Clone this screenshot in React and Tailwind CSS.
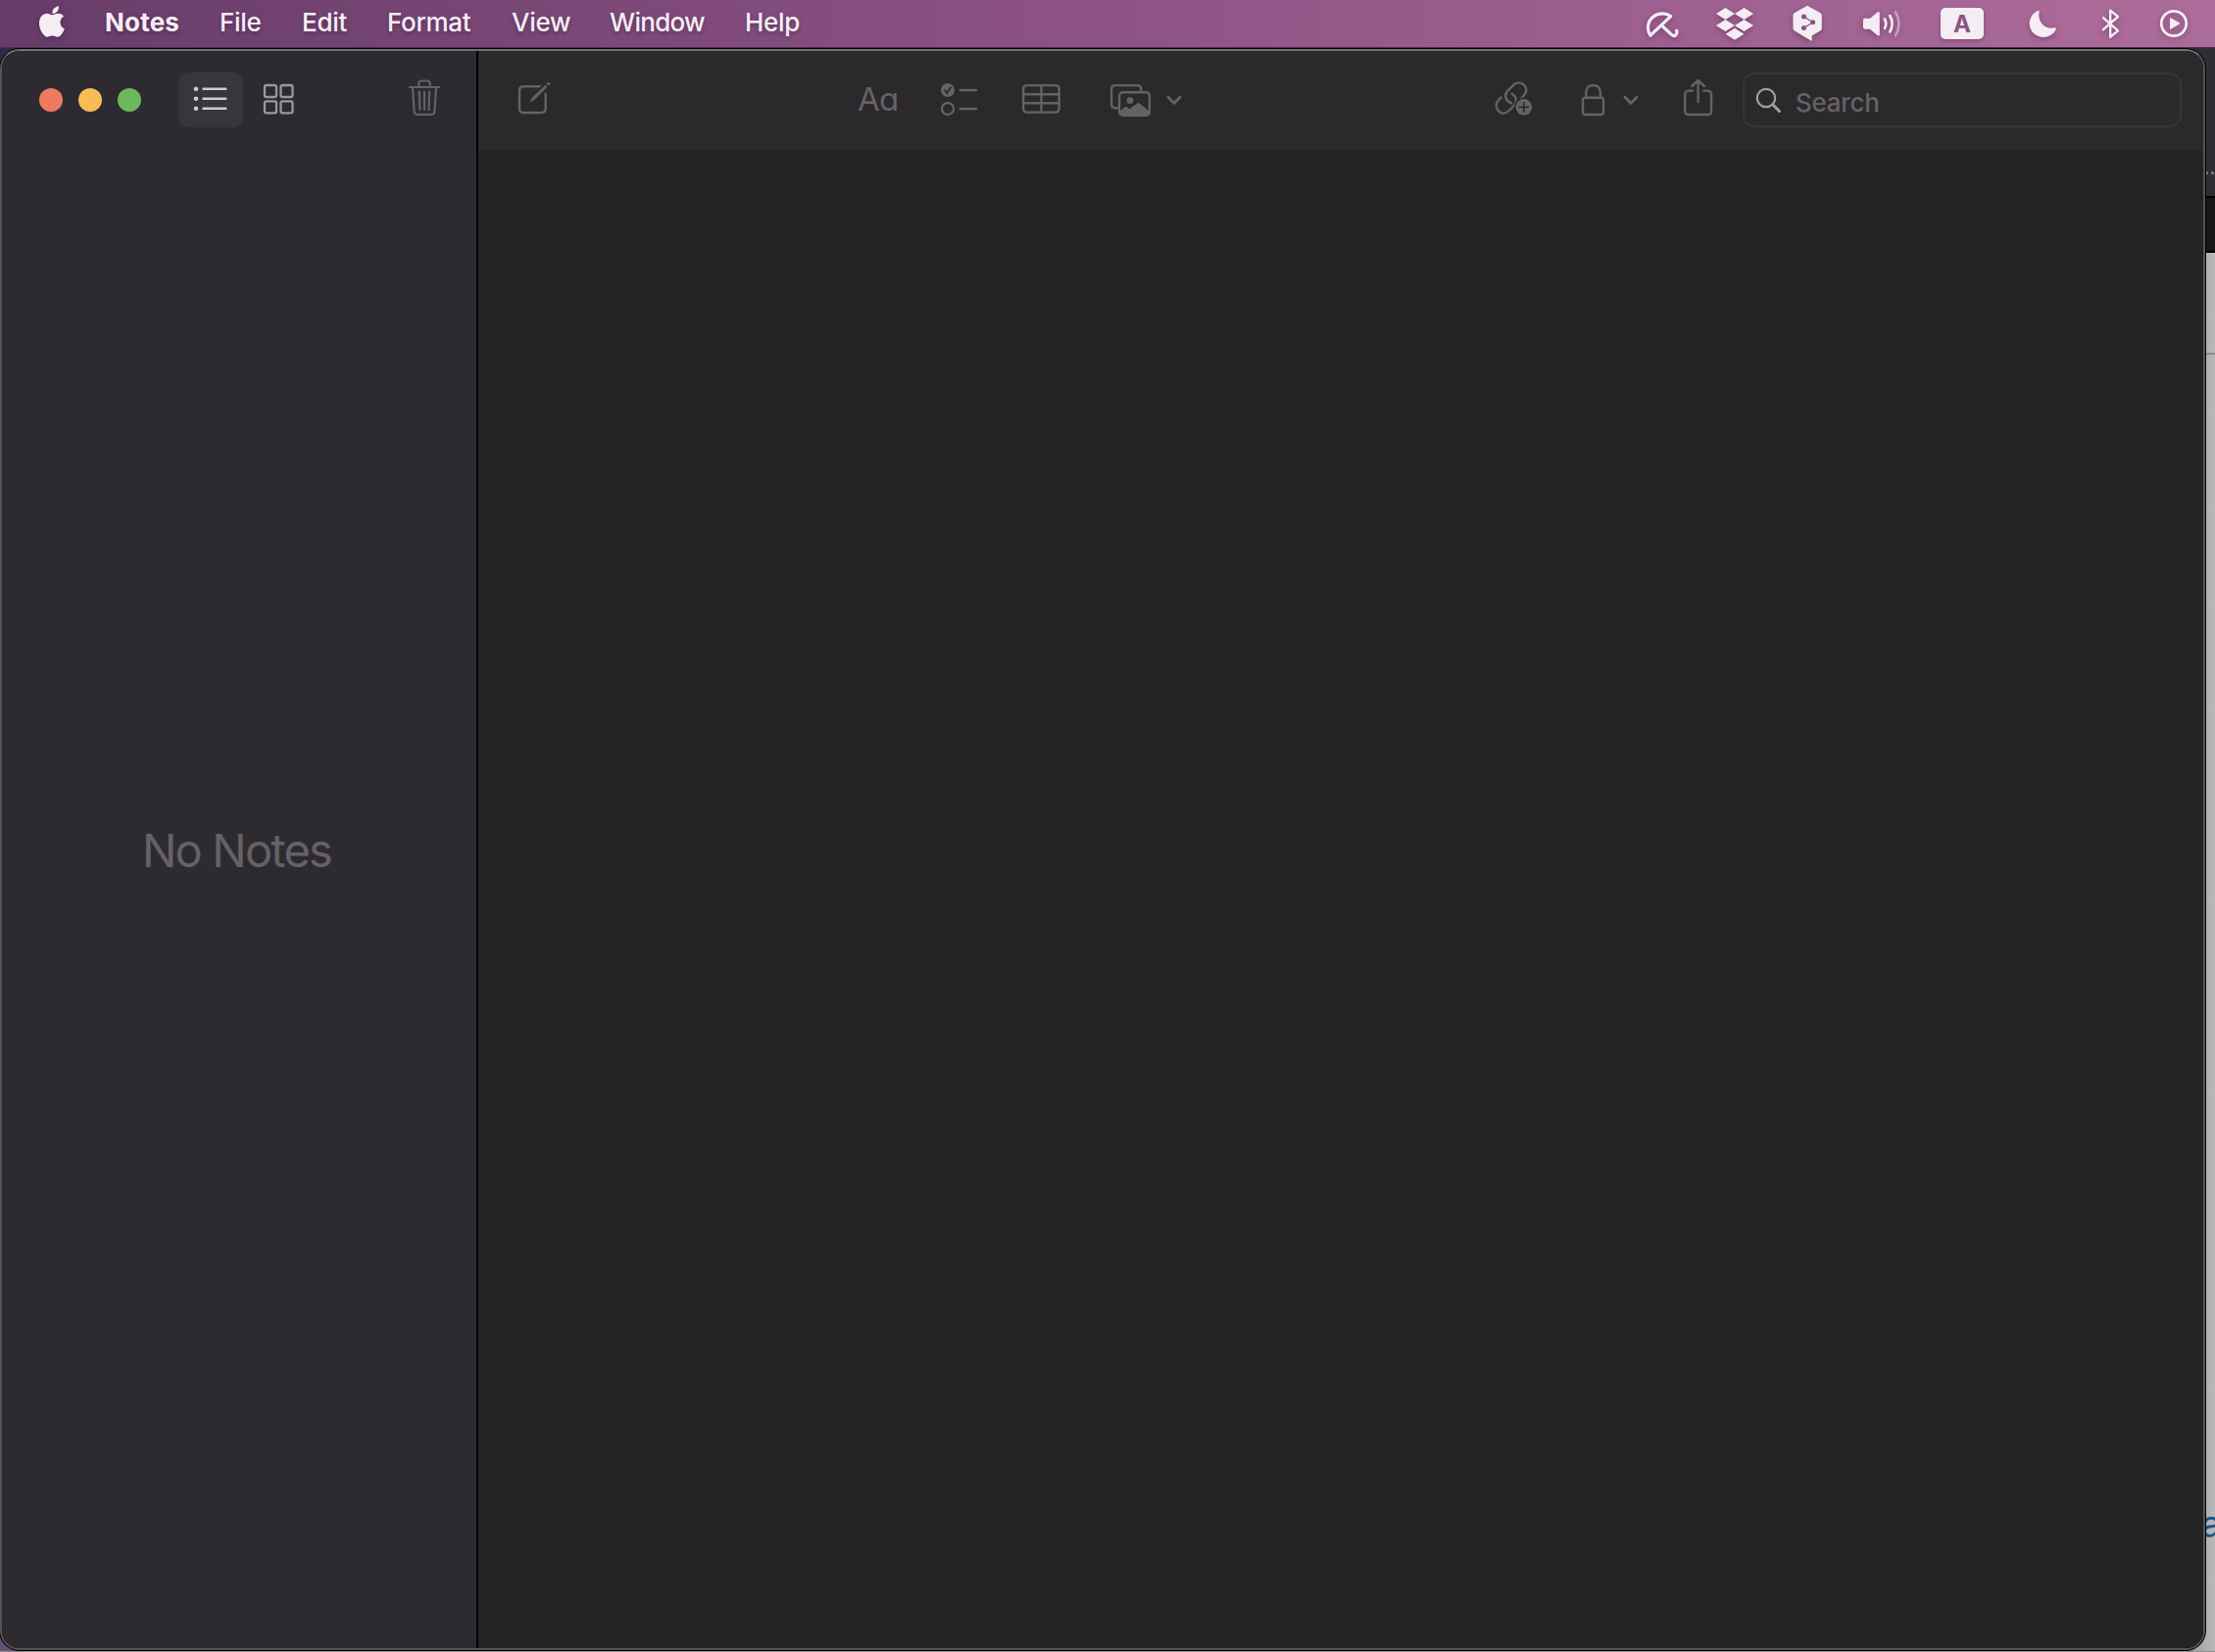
import React from "react";

const INK = "#656266";

/* Menu bar glyph: a full-height slot whose viewBox uses screen coordinates. */
function MenuGlyph({ x, w, className = "", children }) {
  return (
    <svg
      width={w}
      height="48"
      viewBox={`${x} 0 ${w} 48`}
      fill="#f4edf3"
      className={`block shrink-0 drop-shadow-[0_2px_3px_rgba(50,10,50,0.35)] ${className}`}
    >
      {children}
    </svg>
  );
}

/* Toolbar glyph: a 60px high slot starting at y=72 in screen coordinates. */
function Tool({ x, w, color = INK, sw = 2.2, className = "", children }) {
  return (
    <svg
      width={w}
      height="60"
      viewBox={`${x} 72 ${w} 60`}
      fill="none"
      stroke={color}
      strokeWidth={sw}
      strokeLinecap="round"
      strokeLinejoin="round"
      className={`block shrink-0 ${className}`}
    >
      {children}
    </svg>
  );
}

function MenuBar() {
  return (
    <header className="flex h-12 w-full items-start bg-linear-to-r from-[#673c69] via-[#8e5385] to-[#ad6d9b] text-[26px] leading-[46px] font-medium text-[#f5eef4] [text-shadow:0_2px_4px_rgba(40,10,40,0.35)]">
      <MenuGlyph x={0} w={107}>
        <path d="M60 6.2c.3 2.200-.5 4.100-1.700 5.500-1.300 1.500-3.200 2.300-4.900 2.200-.3-2 .6-4 1.800-5.300C56.500 7.200 58.500 6.300 60 6.200z" />
        <path d="M53.300 15.300c1.500 0 3.300-1.500 6.200-1.500 2.400 0 4.300 1 5.600 2.900-5.400 3.200-4.500 10.400.7 12.700-1.300 3.500-4.100 8.300-7.100 8.300-2 0-2.700-1.200-5.200-1.200-2.500 0-3.300 1.200-5.200 1.200-3.500 0-8.300-7.200-8.300-14 0-6.300 4-9.900 7.900-9.900 2.300 0 4.100 1.500 5.400 1.500z" />
      </MenuGlyph>
      <span className="w-[117px] shrink-0 font-bold tracking-[0.2px]">Notes</span>
      <span className="w-[84px] shrink-0 tracking-[-0.3px]">File</span>
      <span className="w-[87px] shrink-0 tracking-[-0.3px]">Edit</span>
      <span className="w-[127px] shrink-0 tracking-[-0.3px]">Format</span>
      <span className="w-[100px] shrink-0 tracking-[-0.3px]">View</span>
      <span className="w-[138px] shrink-0 tracking-[-0.7px]">Window</span>
      <span className="shrink-0 tracking-[-0.3px]">Help</span>

      <div className="ml-auto flex">
        <MenuGlyph x={1670} w={65}>
          <path
            d="M1684 36.200c-4.200-6-3.300-14 2.700-18.900 5.500-4.500 13-4.200 18-.7zM1695.500 26l10 9.300c3 2.700 6.200.3 5.200-4"
            fill="none"
            stroke="#f4edf3"
            strokeWidth="3.200"
            strokeLinecap="round"
            strokeLinejoin="round"
          />
        </MenuGlyph>
        <MenuGlyph x={1735} w={75}>
          <path d="M1760.500 8l9.500 6-9.500 6-9.500-6zM1779.500 8l9.500 6-9.500 6-9.500-6zM1760.500 20l9.500 6-9.500 6-9.500-6zM1779.500 20l9.500 6-9.500 6-9.500-6zM1770 28.700l9.500 6-9.500 6-9.500-6z" />
        </MenuGlyph>
        <MenuGlyph x={1810} w={70}>
          <path d="M1843 6.300q1-.6 2 0l12.500 7q1.300.8 1.300 2.200v13.500q0 1.400-1.300 2.200l-8.800 5.200v5.600l-6-3.600-12-7.200q-1.200-.8-1.200-2.200v-13.500q0-1.400 1.200-2.200z" />
          <g fill="#8b527f" stroke="#8b527f" strokeWidth="1.200">
            <circle cx="1840.500" cy="17" r="1.900" />
            <circle cx="1849.700" cy="22.700" r="1.900" />
            <circle cx="1840.500" cy="28.500" r="1.900" />
            <path d="M1840.500 17l9.200 5.700-9.200 5.800" fill="none" />
          </g>
        </MenuGlyph>
        <MenuGlyph x={1880} w={80}>
          <path d="M1901 20.500q0-1.700 1.700-1.700h5.300l7.500-6.300q2.300-1.200 2.300 1v21.500q0 2.200-2.300 1l-7.500-6.300h-5.300q-1.700 0-1.700-1.700z" />
          <g fill="none" stroke="#f4edf3" strokeWidth="2.600" strokeLinecap="round">
            <path d="M1923 19.500q2.600 4.700 0 9.400" />
            <path d="M1928.300 16q4.600 8.200 0 16.500" />
            <path d="M1934 12.300q7 12 0 24" opacity=".45" />
          </g>
        </MenuGlyph>
        <div className="flex w-[80px] justify-start pt-2 pl-5">
          <div className="flex h-8 w-11 items-center justify-center rounded-[5px] bg-[#f4edf3] pt-px text-[24px] leading-none font-bold text-[#8d5583] shadow-[0_2px_4px_rgba(50,10,50,0.3)] [text-shadow:none]">
            A
          </div>
        </div>
        <MenuGlyph x={2040} w={80}>
          <path d="M2079.500 10.900q1.600-.4 1.200 1.200c-2.200 9.500 5.200 18.500 15.900 16.200q1.700-.3 1.200 1.300c-1.800 4.900-6.700 8.400-12.700 8.400-8 0-14.400-6.200-14.400-13.700 0-6.200 3.500-11.500 8.800-13.400z" />
        </MenuGlyph>
        <MenuGlyph x={2120} w={60}>
          <path
            d="M2146 18.200l15 13.200-7.800 6.400V10.600l7.800 6.400-15 13.200"
            fill="none"
            stroke="#f4edf3"
            strokeWidth="2.400"
            strokeLinecap="round"
            strokeLinejoin="round"
          />
        </MenuGlyph>
        <MenuGlyph x={2180} w={80}>
          <circle cx="2218" cy="24" r="12.700" fill="none" stroke="#f4edf3" strokeWidth="2.700" />
          <path d="M2214 19.300q0-1.500 1.300-.8l8.200 4.700q1.100.8 0 1.600l-8.200 4.700q-1.300.7-1.300-.8z" />
        </MenuGlyph>
      </div>
    </header>
  );
}

function Sidebar() {
  return (
    <aside className="flex h-full w-[484px] shrink-0 flex-col bg-[#2e2b30]">
      <div className="flex h-[102px] shrink-0 items-start pt-5">
        <div className="flex h-[60px] w-[180px] items-center gap-4 pl-[38px]">
          <span className="size-6 rounded-full bg-[#ed7a61]" />
          <span className="size-6 rounded-full bg-[#f8bc56]" />
          <span className="size-6 rounded-full bg-[#6db75d]" />
        </div>
        <div className="mt-0.5 flex h-14 w-[66px] items-center rounded-[11px] bg-[#39363b]">
          <Tool x={182} w={66} color="#cfcccf" sw={2.400}>
            <g fill="#cfcccf" stroke="none">
              <circle cx="200" cy="90.700" r="2.300" />
              <circle cx="200" cy="100.700" r="2.300" />
              <circle cx="200" cy="110.700" r="2.300" />
            </g>
            <path d="M207.500 90.700h22.800M207.500 100.700h22.800M207.500 110.700h22.800" />
          </Tool>
        </div>
        <Tool x={248} w={72} color="#9b989c" sw={2.300}>
          <rect x="270" y="87" width="12" height="12" rx="1.800" />
          <rect x="286.500" y="87" width="12" height="12" rx="1.800" />
          <rect x="270" y="103.300" width="12" height="12" rx="1.800" />
          <rect x="286.500" y="103.300" width="12" height="12" rx="1.800" />
        </Tool>
        <Tool x={400} w={66} className="ml-auto mr-5" sw={2.200}>
          <path d="M418 89h30M427.300 88.500v-3.200q0-2.800 2.800-2.800h5.800q2.800 0 2.800 2.800v3.200M421 89.500l1.600 24.300q.2 3 3.200 3h14.400q3 0 3.200-3l1.600-24.300M427.800 93.500l.6 18.500M433 93.500v18.500M438.200 93.500l-.6 18.500" />
        </Tool>
      </div>
      <div className="flex grow justify-center pt-[684px] pr-[5px] text-[47px] leading-[60px] tracking-[-1.800px] text-[#656266]">
        No Notes
      </div>
    </aside>
  );
}

function Chevron({ x, w, className }) {
  return (
    <Tool x={x - w / 2} w={w} sw={3} className={className}>
      <path d={`M${x - 6} 99.200l6 6 6-6`} />
    </Tool>
  );
}

function Editor() {
  return (
    <main className="flex h-full grow flex-col bg-[#232323]">
      <div className="flex h-[102px] shrink-0 items-start bg-[#2c292c] pt-5">
        <Tool x={488} w={387} sw={2.400}>
          <path d="M550.500 88.200h-16.300q-4.200 0-4.200 4.200v18.400q0 4.200 4.200 4.200h18.300q4.200 0 4.200-4.200v-15.300" />
          <path d="M541.500 103.500l1.800-3.700 13.200-12.600 1.500 1.600-13 12.800z" fill={INK} strokeWidth="1" />
          <circle cx="559.700" cy="85.400" r="1.200" fill={INK} strokeWidth="1" />
        </Tool>
        <span className="mt-0.5 block h-14 w-[75px] shrink-0 text-[33px] leading-[54px] tracking-[-0.7px] text-[#656266] [font-feature-settings:'cv11']">
          Aa
        </span>
        <Tool x={950} w={70} sw={2.300}>
          <circle cx="967" cy="92" r="7" fill={INK} stroke="none" />
          <path d="M964 92.300l2.200 2.700 3.800-5.800" stroke="#2c292c" strokeWidth="1.800" />
          <circle cx="967" cy="111" r="6" />
          <path d="M979.500 92h16.500M979.500 111h16.500" />
        </Tool>
        <Tool x={1020} w={90} sw={2.400}>
          <rect x="1044.100" y="87.100" width="36.500" height="27.500" rx="3.500" />
          <path d="M1044.500 96.200h36M1044.500 105.200h36M1062.500 87.500v27" />
        </Tool>
        <Tool x={1110} w={75} sw={2.400}>
          <path d="M1140.500 110.300h-2.700q-3.700 0-3.700-3.700v-15.800q0-3.700 3.700-3.700h22.700q3.700 0 3.700 3.700v1.500" />
          <rect x="1142.100" y="94.300" width="30.800" height="23.500" rx="3.500" />
          <circle cx="1153" cy="102.600" r="3.400" fill={INK} stroke="none" />
          <path d="M1142.500 113.500l5-4.200q1.200-.8 2.300 0l2.700 2 7.600-5.800q1.300-1 2.600 0l9.800 8v3q0 1-1.200 1h-27.300q-1.500 0-1.500-1.500z" fill={INK} stroke="none" />
        </Tool>
        <Chevron x={1198} w={26} />

        <Tool x={1515} w={60} sw={2.400} className="ml-[304px]">
          <path d="M1531.500 99.500l-3 3.300c-3.200 3.700-2 9 1.700 11.500 3 2 6.700 1.300 9.300-1.300l5.500-5.500c3.300-3.500 2.500-8.800-2.300-11.700" />
          <path d="M1542.200 105.300c-5.600-1.800-8.200-7.700-4.200-12.200l6-6.200c3-3 7.300-3.300 10.500-.7 3.800 3.200 3.500 7.700.5 11l-2.500 2.800" />
          <circle cx="1554.800" cy="109.300" r="9.800" fill="#2c292c" stroke="none" />
          <circle cx="1554.800" cy="109.300" r="8.300" fill={INK} stroke="none" />
          <path d="M1550.300 109.300h9M1554.800 104.800v9" stroke="#2c292c" strokeWidth="1.800" />
        </Tool>
        <Tool x={1575} w={76} sw={2.400}>
          <rect x="1615" y="99.700" width="21" height="17.300" rx="2.500" />
          <path d="M1618.300 99.300v-5.300c0-9.300 14.500-9.300 14.500 0v5.300" />
        </Tool>
        <Chevron x={1664} w={26} />
        <Tool x={1677} w={101} sw={2.400}>
          <path d="M1727 92.600h-4q-3.800 0-3.800 3.800v16.800q0 3.800 3.800 3.800h19.300q3.800 0 3.800-3.800v-16.800q0-3.800-3.800-3.800h-4M1732.600 104v-21.500M1726.200 88l6.400-6 6.400 6" />
        </Tool>
        <div className="mt-0.5 flex h-14 w-[448px] shrink-0 items-center rounded-[12px] border-2 border-[#373438]">
          <Tool x={1780} w={52} color="#a19fa2" sw={2.200}>
            <circle cx="1802" cy="100" r="9.200" />
            <path d="M1809 107l6.500 6.500" strokeWidth="3" />
          </Tool>
          <span className="pt-1.5 text-[26px] leading-[52px] font-[450] tracking-[-0.3px] text-[#656266]">Search</span>
        </div>
      </div>
      <div className="grow" />
    </main>
  );
}

/* Sliver of the windows and desktop that lie behind the Notes window. */
function Backdrop() {
  return (
    <div className="col-start-1 row-start-1 flex h-[1638px] w-[2260px] justify-between overflow-hidden border-t border-b border-t-[#4b2e50] border-b-[#8f8b90] bg-linear-to-b from-[#2f2a4c] to-[#66506f]">
      <div />
      <div className="flex w-[40px] flex-col items-end">
        <div className="flex h-[151px] w-full items-end justify-end gap-[3px] bg-[#302c33] pb-[22px]">
          <span className="size-[3px] rounded-full bg-[#8b888c]" />
          <span className="mr-px size-[3px] rounded-full bg-[#8b888c]" />
        </div>
        <div className="h-[58px] w-full border-y-2 border-black bg-[#161616]" />
        <div className="h-[104px] w-full border-b-2 border-[#8a8a8a] bg-linear-to-r from-[#8f8f8f] to-[#b9b9b9]" />
        <div className="w-full grow overflow-hidden bg-linear-to-r from-[#8f8f8f] to-[#b9b9b9] pt-[1173px] pl-[26px] text-[36px] leading-[40px] text-[#12538f]">
          a
        </div>
      </div>
    </div>
  );
}

export default function App() {
  return (
    <div className="h-[1686px] w-[2260px] overflow-hidden font-['Inter','Liberation_Sans',sans-serif]">
      <MenuBar />
      <div className="grid">
        <Backdrop />
        <div className="col-start-1 row-start-1 mt-0.5 flex h-[1634px] w-[2250px] overflow-hidden rounded-[20px] border-2 border-[#555355] border-t-[#737173] bg-black ring-1 ring-black">
          <Sidebar />
          <div className="w-0.5 shrink-0 bg-black" />
          <Editor />
        </div>
      </div>
    </div>
  );
}
